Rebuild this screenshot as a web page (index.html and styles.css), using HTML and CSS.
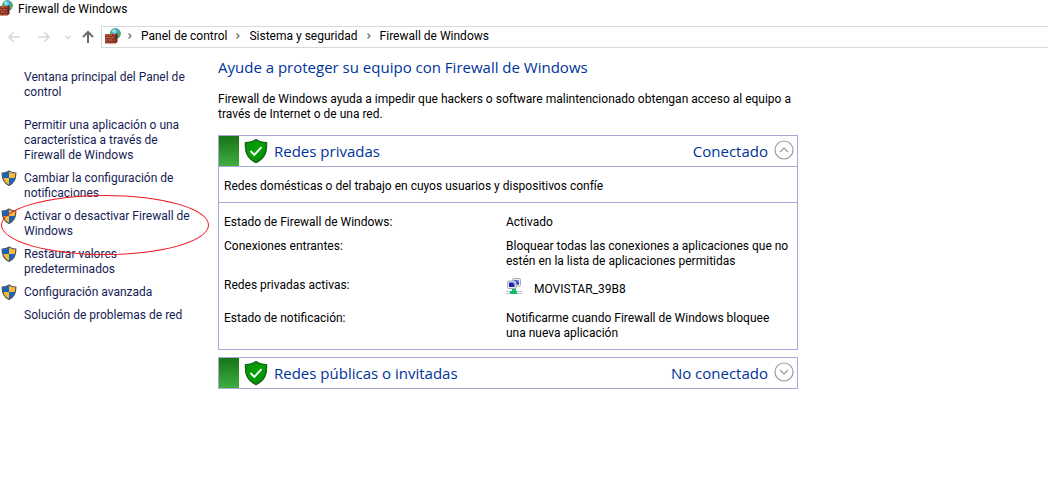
FILE: index.html
```
<!DOCTYPE html>
<html lang="es">
<head>
<meta charset="utf-8">
<meta name="viewport" content="width=device-width, initial-scale=1">
<title>Firewall de Windows</title>
<link rel="stylesheet" href="styles.css">
</head>
<body>
<svg class="defs" aria-hidden="true">
  <defs>
    <radialGradient id="globe-fill" cx="0.4" cy="0.3" r="0.8">
      <stop offset="0" stop-color="#9fe4ff"/><stop offset="0.5" stop-color="#2b93dc"/><stop offset="1" stop-color="#1450a8"/>
    </radialGradient>
    <linearGradient id="shield-fill" x1="0" y1="0" x2="1" y2="1">
      <stop offset="0" stop-color="#0a8f0a"/><stop offset="0.5" stop-color="#05a005"/><stop offset="1" stop-color="#048404"/>
    </linearGradient>
    <clipPath id="uac-clip"><path d="M8 1C6 2.4 3.6 3 1.2 3C1 8.600 2.500 12.800 8 15.500C13.500 12.800 15 8.600 14.800 3C12.400 3 10 2.400 8 1Z"/></clipPath>
  </defs>
  <symbol id="firewall" viewBox="0 0 16 16">
    <circle cx="10.300" cy="5.500" r="5.400" fill="url(#globe-fill)"/>
    <path d="M6 3L9 .6L11 1L9.500 3L8 4L7.500 6L5.500 6ZM13 1.500L15.500 4L15 7.500L13 10L12 7L13.500 5Z" fill="#50b848"/>
    <path d="M8 2L10 1.500L9 3.500L7 4Z" fill="#d5f6ff"/>
    <path d="M0 6L10 6L12 5L12 14L10.500 15.500L0 15.500Z" fill="#a8472f"/>
    <path d="M10.500 6.500L12.500 5.500V13.500L10.500 15.500Z" fill="#6b281b"/>
    <path d="M0 8.500H12M0 11H12M0 13.500H12M3 6V8.500M8 6V8.500M5.500 8.500V11M10 8.500V11M3 11V13.500M8 11V13.500M5.500 13.500V15.500" stroke="#6b2a1e" stroke-width=".6" fill="none"/>
    <path d="M0 7H3M4 7H7M0 9.500H5M6 9.500H9M0 12H2M4 12H7" stroke="#ce7056" stroke-width=".7"/>
  </symbol>
  <symbol id="uac" viewBox="0 0 16 16">
    <g clip-path="url(#uac-clip)">
      <path d="M0 0H8V8H0ZM8 8H16V16H8Z" fill="#1464c0"/>
      <path d="M8 0H16V8H8ZM0 8H8V16H0Z" fill="#fdb931"/>
    </g>
    <path d="M8 1C6 2.400 3.600 3 1.200 3C1 8.600 2.500 12.800 8 15.500C13.500 12.800 15 8.600 14.800 3C12.400 3 10 2.400 8 1Z" fill="none" stroke="#4e5860" stroke-width="1.200"/>
  </symbol>
  <symbol id="ok-shield" viewBox="0 0 24 26">
    <path d="M12 1.500C9 3.700 5 4.600 1.500 4.600C1 14 3 20.500 12 24.500C21 20.500 23 14 22.500 4.600C19 4.600 15 3.700 12 1.500Z" fill="url(#shield-fill)" stroke="#17651a" stroke-width="1.400" stroke-linejoin="round"/>
    <path d="M6.500 13L10.300 16.800L17.500 9.200" fill="none" stroke="#fff" stroke-width="1.900"/>
  </symbol>
  <symbol id="network" viewBox="0 0 16 16">
    <rect x="6.500" y=".5" width="8" height="7.500" rx="1" fill="#e4e8f0" stroke="#a5acb8"/>
    <rect x="8" y="2" width="5" height="4.500" fill="#1b2fc4"/><path d="M10 2H13V5Z" fill="#7e98ee"/>
    <rect x="1.500" y="3" width="8.500" height="7.500" rx="1" fill="#eef0f5" stroke="#a5acb8"/>
    <rect x="3" y="4.500" width="5.500" height="4.500" fill="#1224b0"/><path d="M6 4.500H8.500V7Z" fill="#7e98ee"/>
    <path d="M0 13.500H16M0 15.500H16" stroke="#b9c9cd"/>
    <path d="M6 11H10V13H11V16H4V13H6Z" fill="#12b968"/>
  </symbol>
  <symbol id="crumb" viewBox="0 0 6 8"><path d="M1.500 1.500L4 4L1.500 6.500" fill="none" stroke="#707070" stroke-width="1.300"/></symbol>
</svg>

<header class="titlebar">
  <svg class="icon titlebar-icon" aria-hidden="true"><use href="#firewall"/></svg>
  <span>Firewall de Windows</span>
</header>

<div class="toolbar">
  <div class="history">
    <button class="nav-button" type="button" aria-label="Atrás" disabled><svg viewBox="0 0 14 14"><path d="M13 7H2M6.500 2.500L2 7L6.500 11.500"/></svg></button>
    <button class="nav-button" type="button" aria-label="Adelante" disabled><svg viewBox="0 0 14 14"><path d="M1 7H12M7.500 2.500L12 7L7.500 11.500"/></svg></button>
    <button class="nav-button nav-recent" type="button" aria-label="Ubicaciones recientes" disabled><svg viewBox="0 0 14 14"><path d="M4.500 6L7 8.500L9.500 6"/></svg></button>
    <button class="nav-button nav-up" type="button" aria-label="Subir"><svg viewBox="0 0 14 14"><path d="M7 13V2M2 7L7 2L12 7"/></svg></button>
  </div>
  <nav class="address" aria-label="Ruta">
    <svg class="icon" aria-hidden="true"><use href="#firewall"/></svg>
    <svg class="crumb" aria-hidden="true"><use href="#crumb"/></svg>
    <a href="#panel">Panel de control</a>
    <svg class="crumb" aria-hidden="true"><use href="#crumb"/></svg>
    <a href="#sistema">Sistema y seguridad</a>
    <svg class="crumb" aria-hidden="true"><use href="#crumb"/></svg>
    <a href="#firewall-windows">Firewall de Windows</a>
  </nav>
</div>

<div class="layout">
  <nav class="sidebar" aria-label="Tareas">
    <a class="task task-home" href="#inicio"><span class="task-text">Ventana principal del Panel de control</span></a>
    <a class="task" href="#permitir"><span class="task-text">Permitir una aplicación o una característica a través de Firewall de Windows</span></a>
    <a class="task" href="#notificaciones"><svg class="icon" aria-hidden="true"><use href="#uac"/></svg><span class="task-text">Cambiar la configuración de notificaciones</span></a>
    <a class="task task-marked" href="#activar"><svg class="icon" aria-hidden="true"><use href="#uac"/></svg><span class="task-text">Activar o desactivar Firewall de Windows</span></a>
    <a class="task" href="#restaurar"><svg class="icon" aria-hidden="true"><use href="#uac"/></svg><span class="task-text">Restaurar valores predeterminados</span></a>
    <a class="task" href="#avanzada"><svg class="icon" aria-hidden="true"><use href="#uac"/></svg><span class="task-text">Configuración avanzada</span></a>
    <a class="task" href="#solucion"><span class="task-text">Solución de problemas de red</span></a>
  </nav>

  <main class="content">
    <h1 class="heading">Ayude a proteger su equipo con Firewall de Windows</h1>
    <p class="intro">Firewall de Windows ayuda a impedir que hackers o software malintencionado obtengan acceso al equipo a través de Internet o de una red.</p>

    <section class="panel">
      <div class="panel-header">
        <span class="status-bar"></span>
        <svg class="shield" aria-hidden="true"><use href="#ok-shield"/></svg>
        <h2 class="panel-title">Redes privadas</h2>
        <span class="panel-state">Conectado</span>
        <button class="toggle" type="button" aria-expanded="true" aria-label="Contraer redes privadas"><svg viewBox="0 0 20 20"><circle cx="10" cy="10" r="9"/><path d="M6 12L10 8L14 12"/></svg></button>
      </div>
      <p class="panel-note">Redes domésticas o del trabajo en cuyos usuarios y dispositivos confíe</p>
      <dl class="details">
        <dt>Estado de Firewall de Windows:</dt>
        <dd>Activado</dd>
        <dt>Conexiones entrantes:</dt>
        <dd>Bloquear todas las conexiones a aplicaciones que no estén en la lista de aplicaciones permitidas</dd>
        <dt>Redes privadas activas:</dt>
        <dd class="network"><svg class="icon" aria-hidden="true"><use href="#network"/></svg><span class="network-name">MOVISTAR_39B8</span></dd>
        <dt>Estado de notificación:</dt>
        <dd>Notificarme cuando Firewall de Windows bloquee una nueva aplicación</dd>
      </dl>
    </section>

    <section class="panel">
      <div class="panel-header">
        <span class="status-bar"></span>
        <svg class="shield" aria-hidden="true"><use href="#ok-shield"/></svg>
        <h2 class="panel-title">Redes públicas o invitadas</h2>
        <span class="panel-state">No conectado</span>
        <button class="toggle" type="button" aria-expanded="false" aria-label="Expandir redes públicas o invitadas"><svg viewBox="0 0 20 20"><circle cx="10" cy="10" r="9"/><path d="M6 8L10 12L14 8"/></svg></button>
      </div>
    </section>
  </main>
</div>
</body>
</html>
```
FILE: styles.css
```
*, *::after { box-sizing: border-box; }

body {
  margin: 0;
  background: #fff;
  color: #000;
  font: 12px/15px Roboto, "Open Sans", sans-serif;
  overflow-x: hidden;
}

a { color: inherit; text-decoration: none; }
a:hover { text-decoration: underline; }
h1, h2, p, dl, dd { margin: 0; }

.defs { position: absolute; width: 0; height: 0; }
.icon { flex: none; width: 16px; height: 16px; }

.titlebar {
  display: flex;
  align-items: center;
  gap: 5px;
  height: 18px;
  padding-top: 1px;
}
.titlebar-icon { margin-left: -3px; margin-bottom: 4px; }

.toolbar {
  display: flex;
  align-items: center;
  padding-top: 8px;
}
.history {
  display: flex;
  flex: none;
  align-items: center;
  width: 101px;
  padding-left: 7px;
}
.nav-button {
  width: 14px;
  height: 14px;
  margin-right: 16px;
  padding: 0;
  border: 0;
  background: none;
}
.nav-button svg {
  display: block;
  fill: none;
  stroke: #d6d6d6;
  stroke-width: 1.5;
}
.nav-button:nth-child(2) { margin-right: 10px; }
.nav-recent { margin-right: 6px; }
.nav-up { margin-right: 0; }
.nav-up svg { stroke: #6c6c6c; stroke-width: 2; }

.address {
  display: flex;
  flex: 1;
  align-items: center;
  gap: 8px;
  height: 22px;
  padding: 0 0 2px 3px;
  border: 1px solid #d9d9d9;
  border-right: 0;
  white-space: nowrap;
}
.address .icon { margin-right: -2px; }
.crumb { flex: none; width: 6px; height: 8px; }

.layout { display: flex; align-items: flex-start; }

.sidebar {
  display: flex;
  flex: none;
  flex-direction: column;
  gap: 8px;
  width: 218px;
  padding-top: 22px;
  color: #151c55;
}
.task {
  position: relative;
  display: flex;
  padding-left: 1px;
}
.task .icon { margin: -1px -16px 0 0; }
.task-text { margin-left: 23px; max-width: 172px; }
.task-home { margin-bottom: 10px; }

/* Ring drawn around the highlighted task */
.task-marked::after {
  content: "";
  position: absolute;
  top: -14px;
  left: 1px;
  width: 208px;
  height: 60px;
  border: 1px solid #ed1c24;
  border-radius: 50%;
  pointer-events: none;
  z-index: 1;
}

.content {
  flex: 0 1 580px;
  padding-top: 9px;
}
.heading, .panel-title, .panel-state {
  color: #003399;
  font-family: "Open Sans", sans-serif;
  font-size: 15px;
  font-weight: 400;
  line-height: 20px;
}
.intro { margin: 15px 0 13px; }

.panel { border: 1px solid #a9a9d8; }
.panel + .panel { margin-top: 7px; }
.panel-header {
  display: flex;
  align-items: center;
  height: 30px;
}
.status-bar {
  align-self: stretch;
  width: 20px;
  background: linear-gradient(#187418, #3fae3f);
}
.shield { width: 24px; height: 26px; margin: 0 6px 0 5px; }
.panel-title { flex: 1; }
.toggle {
  width: 20px;
  height: 20px;
  margin: 0 3px 2px 6px;
  padding: 0;
  border: 0;
  background: none;
}
.toggle svg {
  display: block;
  fill: none;
  stroke: #9c9c9c;
  stroke-width: 1.2;
}
.panel-note {
  padding: 12px 5px 8px;
  border: solid #a9a9d8;
  border-width: 1px 0;
}
.details {
  display: grid;
  grid-template-columns: 282px 1fr;
  row-gap: 9px;
  padding: 12px 5px 8px;
}
.details dd { max-width: 284px; }
.network { display: flex; gap: 12px; }
.network-name { padding: 4px 0 5px; }
```
